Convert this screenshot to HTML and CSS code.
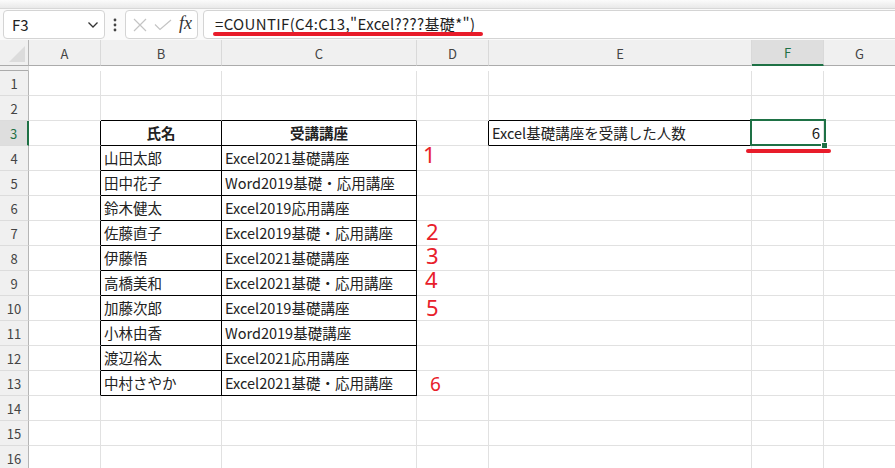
FILE: index.html
```html
<!DOCTYPE html>
<html lang="ja">
<head>
    <meta charset="UTF-8">
    <meta name="viewport" content="width=device-width, initial-scale=1.0">
    <title>COUNTIF ワイルドカード</title>
    <link rel="stylesheet" href="styles.css">
</head>
<body>
    <div class="ribbon-edge"></div>

    <div class="formula-bar">
        <div class="name-box">
            <span>F3</span>
            <svg class="chevron" width="12" height="8" viewBox="0 0 12 8"><path d="M1.5 1.5 L6 6 L10.5 1.5" fill="none" stroke="#333" stroke-width="1.3"/></svg>
        </div>
        <div class="bar-dots">
            <svg width="4" height="14" viewBox="0 0 4 14"><circle cx="2" cy="2" r="1.4" fill="#444"/><circle cx="2" cy="7" r="1.4" fill="#444"/><circle cx="2" cy="12" r="1.4" fill="#444"/></svg>
        </div>
        <div class="fx-box">
            <svg width="14" height="14" viewBox="0 0 14 14"><path d="M1 1 L13 13 M13 1 L1 13" stroke="#c4c4c4" stroke-width="1.2"/></svg>
            <svg width="18" height="12" viewBox="0 0 18 12"><path d="M1 5.5 L6 10.5 L17 1" fill="none" stroke="#c4c4c4" stroke-width="1.2"/></svg>
            <span class="fx">fx</span>
        </div>
        <div class="formula-input">=COUNTIF(C4:C13,"Excel????基礎*")</div>
        <div class="mark mark-formula"></div>
    </div>

    <div class="sheet">
        <div class="row head">
            <div class="corner"><span class="corner-tri"></span></div>
            <div class="col">A</div>
            <div class="col">B</div>
            <div class="col">C</div>
            <div class="col">D</div>
            <div class="col">E</div>
            <div class="col active">F</div>
            <div class="col">G</div>
            <div class="col"></div>
        </div>

        <div class="row"><div class="rh">1</div><div class="c"></div><div class="c"></div><div class="c"></div><div class="c"></div><div class="c"></div><div class="c"></div><div class="c"></div></div>
        <div class="row"><div class="rh">2</div><div class="c"></div><div class="c bk-b"></div><div class="c bk-b"></div><div class="c"></div><div class="c bk-b"></div><div class="c"></div><div class="c"></div></div>
        <div class="row"><div class="rh active">3</div><div class="c bk-r"></div><div class="c bk-r bk-b hd">氏名</div><div class="c bk-r bk-b hd">受講講座</div><div class="c bk-r"></div><div class="c bk-r bk-b">Excel基礎講座を受講した人数</div><div class="c num">6</div><div class="c"></div></div>
        <div class="row"><div class="rh">4</div><div class="c bk-r"></div><div class="c bk-r bk-b">山田太郎</div><div class="c bk-r bk-b">Excel2021基礎講座</div><div class="c"></div><div class="c"></div><div class="c"></div><div class="c"></div></div>
        <div class="row"><div class="rh">5</div><div class="c bk-r"></div><div class="c bk-r bk-b">田中花子</div><div class="c bk-r bk-b">Word2019基礎・応用講座</div><div class="c"></div><div class="c"></div><div class="c"></div><div class="c"></div></div>
        <div class="row"><div class="rh">6</div><div class="c bk-r"></div><div class="c bk-r bk-b">鈴木健太</div><div class="c bk-r bk-b">Excel2019応用講座</div><div class="c"></div><div class="c"></div><div class="c"></div><div class="c"></div></div>
        <div class="row"><div class="rh">7</div><div class="c bk-r"></div><div class="c bk-r bk-b">佐藤直子</div><div class="c bk-r bk-b">Excel2019基礎・応用講座</div><div class="c"></div><div class="c"></div><div class="c"></div><div class="c"></div></div>
        <div class="row"><div class="rh">8</div><div class="c bk-r"></div><div class="c bk-r bk-b">伊藤悟</div><div class="c bk-r bk-b">Excel2021基礎講座</div><div class="c"></div><div class="c"></div><div class="c"></div><div class="c"></div></div>
        <div class="row"><div class="rh">9</div><div class="c bk-r"></div><div class="c bk-r bk-b">高橋美和</div><div class="c bk-r bk-b">Excel2021基礎・応用講座</div><div class="c"></div><div class="c"></div><div class="c"></div><div class="c"></div></div>
        <div class="row"><div class="rh">10</div><div class="c bk-r"></div><div class="c bk-r bk-b">加藤次郎</div><div class="c bk-r bk-b">Excel2019基礎講座</div><div class="c"></div><div class="c"></div><div class="c"></div><div class="c"></div></div>
        <div class="row"><div class="rh">11</div><div class="c bk-r"></div><div class="c bk-r bk-b">小林由香</div><div class="c bk-r bk-b">Word2019基礎講座</div><div class="c"></div><div class="c"></div><div class="c"></div><div class="c"></div></div>
        <div class="row"><div class="rh">12</div><div class="c bk-r"></div><div class="c bk-r bk-b">渡辺裕太</div><div class="c bk-r bk-b">Excel2021応用講座</div><div class="c"></div><div class="c"></div><div class="c"></div><div class="c"></div></div>
        <div class="row"><div class="rh">13</div><div class="c bk-r"></div><div class="c bk-r bk-b">中村さやか</div><div class="c bk-r bk-b">Excel2021基礎・応用講座</div><div class="c"></div><div class="c"></div><div class="c"></div><div class="c"></div></div>
        <div class="row"><div class="rh">14</div><div class="c"></div><div class="c"></div><div class="c"></div><div class="c"></div><div class="c"></div><div class="c"></div><div class="c"></div></div>
        <div class="row"><div class="rh">15</div><div class="c"></div><div class="c"></div><div class="c"></div><div class="c"></div><div class="c"></div><div class="c"></div><div class="c"></div></div>
        <div class="row"><div class="rh">16</div><div class="c"></div><div class="c"></div><div class="c"></div><div class="c"></div><div class="c"></div><div class="c"></div><div class="c"></div></div>

        <!-- selection on F3 -->
        <div class="selection"></div>
        <div class="fill-handle"></div>
        <div class="mark mark-cell"></div>

        <!-- hand written counts -->
        <span class="note n1">1</span>
        <span class="note n2">2</span>
        <span class="note n3">3</span>
        <span class="note n4">4</span>
        <span class="note n5">5</span>
        <span class="note n6">6</span>
    </div>
</body>
</html>
```

FILE: styles.css
```css
* {
    margin: 0;
    padding: 0;
    box-sizing: border-box;
}

body {
    width: 895px;
    height: 468px;
    overflow: hidden;
    background: #fff;
    font-family: "Noto Sans CJK JP", "Noto Sans", sans-serif;
    color: #222;
}

.ribbon-edge {
    height: 9px;
    background: linear-gradient(#fbfbfb, #e9e9e9);
    border-bottom: 1px solid #d8d8d8;
}

/* formula bar */
.formula-bar {
    position: relative;
    display: flex;
    align-items: flex-start;
    height: 31px;
    padding: 1px 0 0 3px;
    background: #fafafa;
}

.name-box,
.fx-box,
.formula-input {
    height: 29px;
    background: #fff;
    border: 1px solid #d4d4d4;
    border-radius: 4px;
}

.name-box {
    width: 102px;
    display: flex;
    align-items: center;
    justify-content: space-between;
    padding: 0 5px 0 8px;
    font-size: 15px;
}

.bar-dots {
    width: 20px;
    height: 29px;
    display: flex;
    align-items: center;
    justify-content: center;
}

.fx-box {
    width: 73px;
    display: flex;
    align-items: center;
    gap: 7px;
    padding: 0 0 0 7px;
}

.fx {
    font-family: "Liberation Serif", serif;
    font-style: italic;
    font-size: 18px;
    color: #333;
    margin-top: -2px;
}

.formula-input {
    flex: 1;
    margin-left: 5px;
    margin-right: -8px;
    padding: 0 0 0 11px;
    font-size: 15px;
    letter-spacing: 0.35px;
    line-height: 26px;
    white-space: nowrap;
    color: #1f1f1f;
}

/* red marker lines */
.mark {
    position: absolute;
    background: #e81c2a;
    border-radius: 3px;
}

.mark-formula {
    left: 213px;
    top: 23px;
    width: 270px;
    height: 4px;
}

.mark-cell {
    left: 746px;
    top: 109px;
    width: 85px;
    height: 4px;
}

/* grid */
.sheet {
    position: relative;
}

.row {
    display: grid;
    grid-template-columns: 29px 72px 121px 195px 72px 263px 72px 72px;
    height: 25px;
}

.row.head {
    height: 31px;
}

.corner,
.col,
.rh {
    background: #f0f0f0;
    color: #444;
    font-size: 13px;
    display: flex;
    align-items: center;
    justify-content: center;
}

.corner {
    position: relative;
    border-right: 1px solid #b5b5b5;
    border-bottom: 1px solid #ababab;
}

.corner-tri {
    position: absolute;
    right: 3px;
    bottom: 3px;
    width: 0;
    height: 0;
    border-left: 16px solid transparent;
    border-bottom: 16px solid #dcdcdc;
}

.col {
    border-right: 1px solid #d9d9d9;
    border-bottom: 1px solid #ababab;
    padding-top: 2px;
}

.col.active {
    background: #dedede;
    color: #1e7145;
    border-bottom: 2px solid #1e7145;
}

.rh {
    border-right: 1px solid #b5b5b5;
    border-bottom: 1px solid #dcdcdc;
}

.rh.active {
    background: #dedede;
    color: #1e7145;
    border-right: 2px solid #1e7145;
}

.c {
    border-right: 1px solid #e1e1e1;
    border-bottom: 1px solid #e1e1e1;
    font-size: 14.5px;
    line-height: 24px;
    padding-left: 3px;
    white-space: nowrap;
    overflow: visible;
}

.c.bk-r {
    border-right-color: #000;
}

.c.bk-b {
    border-bottom-color: #000;
}

.c.hd {
    font-weight: bold;
    text-align: center;
    padding-left: 0;
}

.c.num {
    text-align: right;
    padding-right: 3px;
    font-size: 15px;
}

/* selection */
.selection {
    position: absolute;
    left: 750px;
    top: 79px;
    width: 76px;
    height: 27px;
    border: 2px solid #1e7145;
}

.fill-handle {
    position: absolute;
    left: 821px;
    top: 102px;
    width: 7px;
    height: 7px;
    background: #1e7145;
    border: 1px solid #fff;
}

/* red notes */
.note {
    position: absolute;
    display: block;
    height: 20px;
    font-family: "Noto Sans", sans-serif;
    font-size: 22px;
    line-height: 20px;
    color: #e8202a;
}

.n1 { left: 423px; top: 104px; }
.n2 { left: 426px; top: 181px; }
.n3 { left: 426px; top: 205px; }
.n4 { left: 425px; top: 229px; }
.n5 { left: 426px; top: 257px; }
.n6 { left: 430px; top: 335px; font-size: 19px; height: 18px; line-height: 18px; }
```
